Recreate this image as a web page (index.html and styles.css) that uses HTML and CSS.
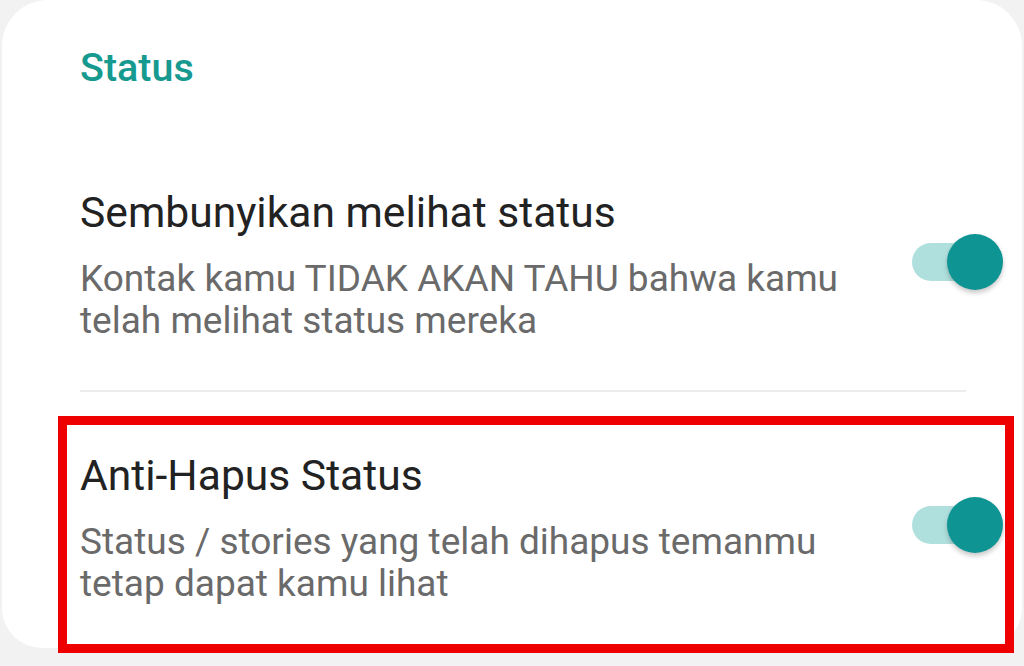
FILE: index.html
```html
<!DOCTYPE html>
<html lang="id">
<head>
<meta charset="utf-8">
<title>Status</title>
<link rel="stylesheet" href="styles.css">
</head>
<body>
<div class="card">
  <div class="header">Status</div>
  <div class="item item-first">
    <div class="texts">
      <div class="title">Sembunyikan melihat status</div>
      <div class="sub">Kontak kamu TIDAK AKAN TAHU bahwa kamu<br>telah melihat status mereka</div>
    </div>
    <div class="toggle"><span class="track"></span><span class="thumb"></span></div>
  </div>
  <div class="divider"></div>
  <div class="highlight">
    <div class="item item-second">
      <div class="texts">
        <div class="title">Anti-Hapus Status</div>
        <div class="sub">Status / stories yang telah dihapus temanmu<br>tetap dapat kamu lihat</div>
      </div>
      <div class="toggle"><span class="track"></span><span class="thumb"></span></div>
    </div>
  </div>
</div>
</body>
</html>
```
FILE: styles.css
```css
html, body {
  margin: 0;
  padding: 0;
  background: #f2f2f2;
  width: 1024px;
  height: 666px;
  overflow: hidden;
  font-family: Roboto, "Noto Sans", "Liberation Sans", sans-serif;
}

.card {
  margin: 0 2px;
  height: 648px;
  background: #ffffff;
  border-radius: 46px 46px 40px 40px;
  box-sizing: border-box;
  padding-top: 46px;
}

.header {
  padding-left: 78px;
  font-size: 39.5px;
  line-height: 44px;
  font-weight: 500;
  color: #16998f;
}

.item {
  display: flex;
  align-items: center;
}

.item-first {
  margin-top: 97px;
  padding-left: 78px;
  padding-right: 19px;
}

.texts {
  flex: 1;
}

.title {
  font-size: 42.6px;
  line-height: 50px;
  color: #222222;
}

.sub {
  margin-top: 21px;
  font-size: 37px;
  line-height: 42px;
  color: #6a6a6a;
}

.toggle {
  position: relative;
  width: 91px;
  height: 58px;
  margin-bottom: 6px;
}

.track {
  position: absolute;
  left: 0;
  top: 10px;
  width: 82px;
  height: 38px;
  border-radius: 19px;
  background: #b0e0de;
}

.thumb {
  position: absolute;
  right: 0;
  top: 1px;
  width: 56px;
  height: 56px;
  border-radius: 50%;
  background: #0f9494;
  box-shadow: 0 3px 5px rgba(0, 0, 0, 0.22);
}

.divider {
  margin: 48px 56px 0 78px;
  height: 2px;
  background: #ececec;
}

.highlight {
  margin: 24px 8px 0 56px;
  border: 9px solid #ee0000;
  height: 237px;
  box-sizing: border-box;
}

.item-second {
  padding: 25px 2px 0 13px;
}
```
